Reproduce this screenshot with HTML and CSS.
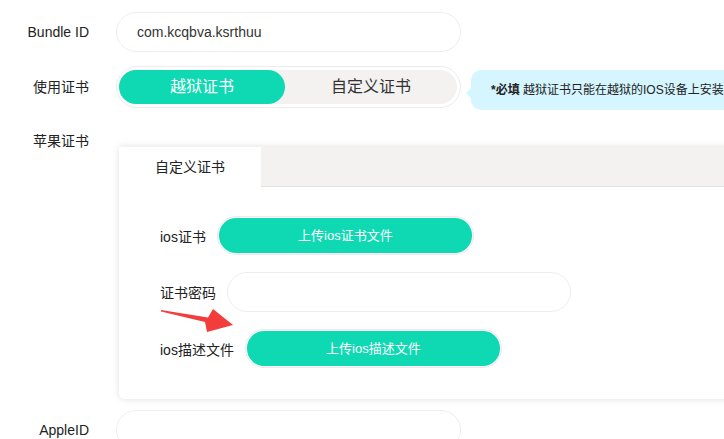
FILE: index.html
```html
<!DOCTYPE html>
<html lang="zh-cn">
<head>
    <meta charset="UTF-8">
    <meta name="viewport" content="width=device-width, initial-scale=1.0">
    <title>证书设置</title>
    <link rel="stylesheet" href="styles.css">
</head>
<body>
    <div class="form">
        <div class="row">
            <label class="label">Bundle ID</label>
            <div class="input">com.kcqbva.ksrthuu</div>
        </div>

        <div class="row">
            <label class="label">使用证书</label>
            <div class="toggle">
                <div class="toggle-inner">
                    <span class="opt active">越狱证书</span>
                    <span class="opt">自定义证书</span>
                </div>
            </div>
            <div class="tip"><b>*必填</b> 越狱证书只能在越狱的IOS设备上安装</div>
        </div>

        <div class="row row-top">
            <label class="label">苹果证书</label>
        </div>

        <div class="card">
            <div class="tabs">
                <div class="tab active">自定义证书</div>
                <div class="tab-rest"></div>
            </div>
            <div class="card-body">
                <div class="crow">
                    <span class="clabel">ios证书</span>
                    <div class="btn"><span>上传ios证书文件</span></div>
                </div>
                <div class="crow crow-pwd">
                    <span class="clabel">证书密码</span>
                    <div class="input input-sm"></div>
                </div>
                <div class="crow">
                    <span class="clabel">ios描述文件</span>
                    <div class="btn"><span>上传ios描述文件</span></div>
                </div>

                <!--箭头-->
                <svg class="arrow" width="75" height="26" viewBox="0 0 75 26">
                    <polygon points="0,2 47,9.5 52,1 72,17 46,24 44,14 0,3.5" fill="#f33d3d"/>
                </svg>
            </div>
        </div><!--card-->

        <div class="row row-last">
            <label class="label">AppleID</label>
            <div class="input"></div>
        </div>
    </div><!--form-->
</body>
</html>
```

FILE: styles.css
```css
html, body{
    margin: 0;
    overflow: hidden;
    background: #fff;
}

body{
    font-family: "Liberation Sans", "Noto Sans CJK SC", sans-serif;
    color: #333;
    font-size: 14px;
}

.form{
    padding-top: 12px;
    width: 900px;
}

.row{
    display: flex;
    align-items: center;
    margin-bottom: 14px;
}

.label{
    width: 89px;
    margin-right: 27px;
    text-align: right;
    font-size: 14px;
    line-height: 20px;
    color: #222;
}

.input{
    width: 345px;
    height: 40px;
    box-sizing: border-box;
    border: 1px solid #eeeeee;
    border-radius: 20px;
    padding-left: 20px;
    line-height: 38px;
    font-size: 14px;
    color: #333;
}

.toggle{
    width: 345px;
    height: 42px;
    box-sizing: border-box;
    border: 1px solid #ececec;
    border-radius: 21px;
    padding: 3px 3px 3px 2px;
}

.toggle-inner{
    display: flex;
    height: 34px;
    background: #f3f2f1;
    border-radius: 17px;
}

.opt{
    flex: 1;
    text-align: center;
    line-height: 34px;
    font-size: 16px;
    color: #333;
}

.opt.active{
    flex: 0 0 166px;
    background: #0fd9b3;
    color: #fff;
    border-radius: 17px;
}

.tip{
    position: relative;
    top: 3px;
    margin-left: 10px;
    height: 40px;
    line-height: 40px;
    padding: 0 20px;
    background: #d5f5ff;
    border-radius: 10px;
    font-size: 12px;
    white-space: nowrap;
    color: #222;
}

.tip::before{
    content: "";
    position: absolute;
    left: -5px;
    top: 17px;
    border-top: 6px solid transparent;
    border-bottom: 6px solid transparent;
    border-right: 6px solid #d5f5ff;
}

.row-top{
    margin-top: 23px;
    margin-bottom: 0;
}

.card{
    margin: -4px 0 0 119px;
    width: 640px;
    background: #fff;
    border-radius: 0 0 6px 6px;
    box-shadow: 0 0 7px rgba(0, 0, 0, 0.13);
}

.tabs{
    display: flex;
    height: 40px;
}

.tab{
    width: 142px;
    text-align: center;
    line-height: 40px;
    font-size: 14px;
    color: #222;
}

.tab-rest{
    flex: 1;
    background: #f3f2f0;
    border-bottom: 1px solid #e2e1df;
}

.card-body{
    position: relative;
    padding: 29px 0 31px 41px;
}

.crow{
    display: flex;
    align-items: center;
    margin-bottom: 17px;
}

.crow:last-of-type{
    margin-bottom: 0;
}

.crow-pwd{
    margin-top: 4px;
}

.clabel{
    margin-right: 11px;
    font-size: 14px;
    color: #222;
}

.btn{
    width: 257px;
    height: 39px;
    box-sizing: border-box;
    border: 1px solid #ebebeb;
    border-radius: 19px;
    padding: 1px;
}

.btn span{
    display: block;
    height: 35px;
    line-height: 35px;
    background: #0fd9b3;
    border-radius: 17px;
    text-align: center;
    color: #fff;
    font-size: 13px;
}

.input-sm{
    width: 344px;
}

.arrow{
    position: absolute;
    left: 42px;
    top: 121px;
}

.row-last{
    margin-top: 11px;
}
```
